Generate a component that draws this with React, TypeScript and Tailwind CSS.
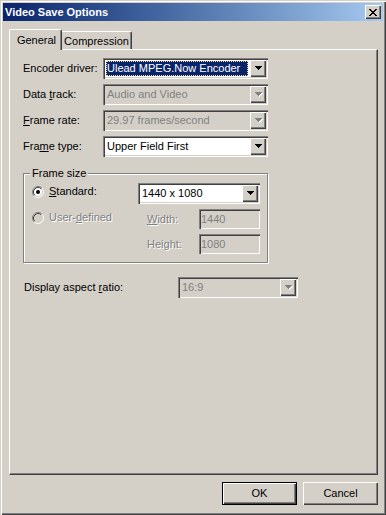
import React from 'react';

const raised = 'shadow-[inset_1px_1px_0_#ffffff,inset_-1px_-1px_0_#404040,inset_-2px_-2px_0_#808080]';
const sunken = 'shadow-[inset_1px_1px_0_#808080,inset_2px_2px_0_#404040,inset_-1px_-1px_0_#ffffff,inset_-2px_-2px_0_#d4d0c8]';
const embossed = 'text-[#808080] [text-shadow:1px_1px_0_#ffffff]';

const arrowPath = 'M0 0h7v1h-1v1h-1v1h-1v1h-1v-1h-1v-1h-1v-1h-1z';

function DropButton({ disabled }: { disabled?: boolean }) {
    return (
        <div className={`w-[16px] h-full flex items-center justify-center bg-[#d4d0c8] ${raised}`}>
            <svg width="8" height="5" viewBox="0 0 8 5" className="ml-[1px]">
                {disabled ? (
                    <>
                        <path d={arrowPath} fill="#ffffff" transform="translate(1 1)" />
                        <path d={arrowPath} fill="#808080" />
                    </>
                ) : (
                    <path d={arrowPath} fill="#000000" />
                )}
            </svg>
        </div>
    );
}

function Combo({ width, value, disabled, focused }: { width: string; value: string; disabled?: boolean; focused?: boolean }) {
    return (
        <div className={`${width} h-[21px] flex p-[2px] ${disabled ? 'bg-[#d4d0c8]' : 'bg-white'} ${sunken}`}>
            {focused ? (
                <div className="flex-1 m-[1px] mr-[2px] flex items-center bg-[#0a246a] text-white border border-dotted border-[#f5db95] whitespace-nowrap overflow-hidden">
                    {value}
                </div>
            ) : (
                <div className={`flex-1 flex items-center pl-[2px] whitespace-nowrap overflow-hidden ${disabled ? 'text-[#808080]' : 'text-black'}`}>
                    {value}
                </div>
            )}
            <DropButton disabled={disabled} />
        </div>
    );
}

function Edit({ value }: { value: string }) {
    return (
        <div className={`w-[61px] h-[20px] flex items-center pl-[2px] pt-[1px] bg-[#d4d0c8] text-[#808080] ${sunken}`}>
            {value}
        </div>
    );
}

function Radio({ checked, disabled }: { checked?: boolean; disabled?: boolean }) {
    return (
        <svg width="12" height="12" viewBox="0 0 12 12" className="shrink-0">
            <circle cx="6" cy="6" r="4.2" fill={disabled ? '#d4d0c8' : '#ffffff'} />
            <path d="M9.89 2.11 A5.5 5.5 0 0 0 2.11 9.89" fill="none" stroke="#808080" strokeWidth="1" />
            <path d="M9.89 2.11 A5.5 5.5 0 0 1 2.11 9.89" fill="none" stroke="#ffffff" strokeWidth="1" />
            <path d="M9.18 2.82 A4.5 4.5 0 0 0 2.82 9.18" fill="none" stroke="#404040" strokeWidth="1" />
            <path d="M9.18 2.82 A4.5 4.5 0 0 1 2.82 9.18" fill="none" stroke="#d4d0c8" strokeWidth="1" />
            {checked && <circle cx="6" cy="6" r="2" fill="#000000" />}
        </svg>
    );
}

function CloseGlyph() {
    // classic 8x7 caption close cross
    const rows = ['11000011', '01100110', '00111100', '00011000', '00111100', '01100110', '11000011'];
    return (
        <svg width="8" height="7" viewBox="0 0 8 7" shapeRendering="crispEdges">
            {rows.map((r, y) =>
                r.split('').map((c, x) => (c === '1' ? <rect key={`${x}-${y}`} x={x} y={y} width="1" height="1" fill="#000" /> : null))
            )}
        </svg>
    );
}

export default function App() {
    return (
        <div className="w-[386px] h-[515px] flex flex-col p-[3px] bg-[#d4d0c8] text-[11px] leading-[13px] text-black font-['Liberation_Sans',Arial,sans-serif] shadow-[inset_1px_1px_0_#d4d0c8,inset_2px_2px_0_#ffffff,inset_-1px_-1px_0_#404040,inset_-2px_-2px_0_#808080]">
            {/* Title bar */}
            <div className="h-[18px] flex items-center justify-between pl-[2px] pr-[2px] bg-linear-to-r from-[#0a246a] to-[#a6caf0]">
                <span className="font-bold text-white">Video Save Options</span>
                <div className={`w-[16px] h-[14px] flex items-center justify-center bg-[#d4d0c8] ${raised}`}>
                    <CloseGlyph />
                </div>
            </div>

            <div className="flex flex-col pt-[8px] pl-[6px]">
                {/* Tabs */}
                <div className="flex items-end h-[20px]">
                    <div className="relative z-10 w-[53px] h-[21px] -mb-px flex justify-center pt-[4px] pl-[2px] bg-[#d4d0c8] border-l border-t border-white border-r border-r-[#404040] rounded-t-[2px] shadow-[inset_-1px_0_0_#808080]">
                        General
                    </div>
                    <div className="w-[70px] h-[18px] flex justify-center pt-[3px] bg-[#d4d0c8] border-t border-white border-r border-r-[#404040] rounded-tr-[2px] shadow-[inset_-1px_0_0_#808080]">
                        Compression
                    </div>
                </div>

                {/* Tab panel */}
                <div className="w-[369px] h-[426px] flex flex-col pt-[8px] pl-[13px] border border-t-white border-l-white border-r-[#404040] border-b-[#404040] shadow-[inset_-1px_-1px_0_#808080]">
                    <div className="flex flex-col gap-[5px]">
                        <div className="flex items-center">
                            <span className="w-[80px]">Encoder driver:</span>
                            <Combo width="w-[165px]" value="Ulead MPEG.Now Encoder" focused />
                        </div>
                        <div className="flex items-center">
                            <span className="w-[80px]">Data <u>t</u>rack:</span>
                            <Combo width="w-[165px]" value="Audio and Video" disabled />
                        </div>
                        <div className="flex items-center">
                            <span className="w-[80px]"><u>F</u>rame rate:</span>
                            <Combo width="w-[165px]" value="29.97 frames/second" disabled />
                        </div>
                        <div className="flex items-center">
                            <span className="w-[80px]">Fra<u>m</u>e type:</span>
                            <Combo width="w-[165px]" value="Upper Field First" />
                        </div>
                    </div>

                    {/* Frame size group */}
                    <div className="relative mt-[16px] w-[245px] h-[90px] flex flex-col pt-[9px] pl-[8px] border border-[#808080] shadow-[inset_1px_1px_0_#ffffff,1px_1px_0_#ffffff]">
                        <span className="absolute top-[-7px] left-[6px] px-[2px] bg-[#d4d0c8]">Frame size</span>
                        <div className="flex items-center h-[21px]">
                            <div className="w-[106px] flex items-center gap-[5px] mb-[4px]">
                                <Radio checked />
                                <span><u>S</u>tandard:</span>
                            </div>
                            <Combo width="w-[122px]" value="1440 x 1080" />
                        </div>
                        <div className="flex items-center h-[20px] mt-[5px]">
                            <div className="w-[115px] flex items-center gap-[5px] mb-[3px]">
                                <Radio disabled />
                                <span className={embossed}>User-<u>d</u>efined</span>
                            </div>
                            <span className={`w-[52px] ${embossed}`}><u>W</u>idth:</span>
                            <Edit value="1440" />
                        </div>
                        <div className="flex items-center h-[20px] mt-[5px] pl-[115px]">
                            <span className={`w-[52px] ${embossed}`}>Hei<u>g</u>ht:</span>
                            <Edit value="1080" />
                        </div>
                    </div>

                    <div className="flex items-center mt-[14px] pl-[1px]">
                        <span className="w-[154px]">Display aspect <u>r</u>atio:</span>
                        <Combo width="w-[120px]" value="16:9" disabled />
                    </div>
                </div>

                {/* Buttons */}
                <div className="w-[369px] flex justify-end gap-[6px] mt-[7px]">
                    <button className={`w-[75px] h-[23px] flex items-center justify-center bg-[#d4d0c8] border border-black ${raised}`}>
                        OK
                    </button>
                    <button className={`w-[75px] h-[23px] flex items-center justify-center bg-[#d4d0c8] ${raised}`}>
                        Cancel
                    </button>
                </div>
            </div>
        </div>
    );
}
